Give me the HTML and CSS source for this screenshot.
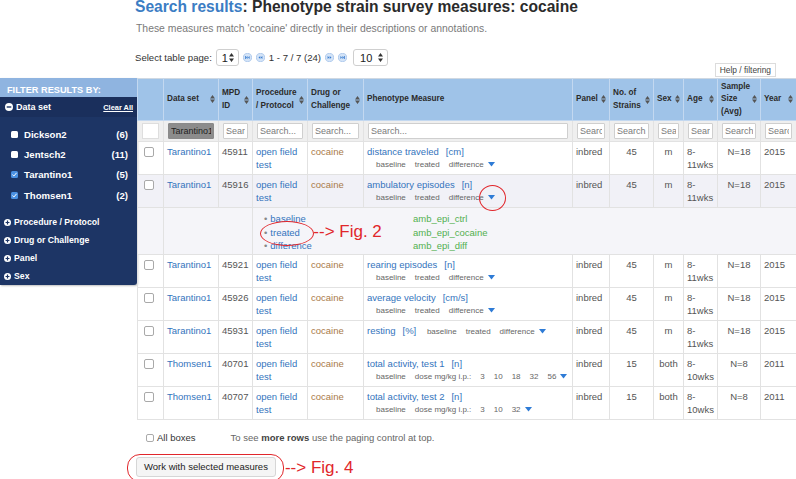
FILE: index.html
```html
<!DOCTYPE html>
<html>
<head>
<meta charset="utf-8">
<title>Search results</title>
<link rel="stylesheet" href="styles.css">
</head>
<body>
<div class="page">
  <aside class="filters">
    <div class="filters-head">FILTER RESULTS BY:</div>
    <div class="facet-head">
      <svg class="ico" width="8" height="8" viewBox="0 0 8 8"><circle cx="4" cy="4" r="4" fill="#fff"/><rect x="1.7" y="3.3" width="4.6" height="1.4" fill="#1d3565"/></svg>
      Data set<span class="clear">Clear All</span>
    </div>
    <div class="facet-list">
      <div class="facet-item"><span class="cb"></span>Dickson2<span class="count">(6)</span></div>
      <div class="facet-item"><span class="cb"></span>Jentsch2<span class="count">(11)</span></div>
      <div class="facet-item"><span class="cb on"><svg width="7" height="7" viewBox="0 0 7 7"><path d="M1.4 3.6 2.9 5 5.6 1.8" fill="none" stroke="#fff" stroke-width="1"/></svg></span>Tarantino1<span class="count">(5)</span></div>
      <div class="facet-item"><span class="cb on"><svg width="7" height="7" viewBox="0 0 7 7"><path d="M1.4 3.6 2.9 5 5.6 1.8" fill="none" stroke="#fff" stroke-width="1"/></svg></span>Thomsen1<span class="count">(2)</span></div>
    </div>
    <div class="facet"><svg class="ico" width="7" height="7" viewBox="0 0 8 8"><circle cx="4" cy="4" r="4" fill="#fff"/><path d="M4 1.8v4.4M1.8 4h4.4" stroke="#1d3565" stroke-width="1.4"/></svg>Procedure / Protocol</div>
    <div class="facet"><svg class="ico" width="7" height="7" viewBox="0 0 8 8"><circle cx="4" cy="4" r="4" fill="#fff"/><path d="M4 1.8v4.4M1.8 4h4.4" stroke="#1d3565" stroke-width="1.4"/></svg>Drug or Challenge</div>
    <div class="facet"><svg class="ico" width="7" height="7" viewBox="0 0 8 8"><circle cx="4" cy="4" r="4" fill="#fff"/><path d="M4 1.8v4.4M1.8 4h4.4" stroke="#1d3565" stroke-width="1.4"/></svg>Panel</div>
    <div class="facet"><svg class="ico" width="7" height="7" viewBox="0 0 8 8"><circle cx="4" cy="4" r="4" fill="#fff"/><path d="M4 1.8v4.4M1.8 4h4.4" stroke="#1d3565" stroke-width="1.4"/></svg>Sex</div>
  </aside>

  <main class="main">
    <h1 class="title"><span class="hl">Search results</span>: Phenotype strain survey measures: cocaine</h1>
    <p class="sub">These measures match 'cocaine' directly in their descriptions or annotations.</p>

    <div class="toolbar">
      <div class="pager">
        <span class="pg-label">Select table page:</span>
        <span class="sel sel1">1<svg width="5" height="9" viewBox="0 0 5 9"><path d="M2.5 0 5 3.4H0zM2.5 9 0 5.6h5z" fill="#333"/></svg></span>
        <svg class="pg" width="9" height="9" viewBox="0 0 9 9"><circle cx="4.5" cy="4.5" r="4.1" fill="#d4e4f7" stroke="#a3c2ea" stroke-width=".8"/><path d="M2.6 3v3" stroke="#3d7fd0" stroke-width=".9"/><path d="M4.6 3 3 4.5 4.6 6zM6.6 3 5 4.5 6.6 6z" fill="#3d7fd0"/></svg>
        <svg class="pg" width="9" height="9" viewBox="0 0 9 9"><circle cx="4.5" cy="4.5" r="4.1" fill="#d4e4f7" stroke="#a3c2ea" stroke-width=".8"/><path d="M4.3 3 2.5 4.5 4.3 6zM6.4 3 4.6 4.5 6.4 6z" fill="#3d7fd0"/></svg>
        <span class="pg-text">1 - 7 / 7 (24)</span>
        <svg class="pg" width="9" height="9" viewBox="0 0 9 9"><circle cx="4.5" cy="4.5" r="4.1" fill="#d4e4f7" stroke="#a3c2ea" stroke-width=".8"/><path d="M4.7 3 6.5 4.5 4.7 6zM2.6 3 4.4 4.5 2.6 6z" fill="#3d7fd0"/></svg>
        <svg class="pg" width="9" height="9" viewBox="0 0 9 9"><circle cx="4.5" cy="4.5" r="4.1" fill="#d4e4f7" stroke="#a3c2ea" stroke-width=".8"/><path d="M6.4 3v3" stroke="#3d7fd0" stroke-width=".9"/><path d="M4.4 3 6 4.5 4.4 6zM2.4 3 4 4.5 2.4 6z" fill="#3d7fd0"/></svg>
        <span class="sel sel10">10<svg width="5" height="9" viewBox="0 0 5 9"><path d="M2.5 0 5 3.4H0zM2.5 9 0 5.6h5z" fill="#333"/></svg></span>
      </div>
      <button class="help">Help / filtering</button>
    </div>

    <table class="grid">
      <colgroup>
        <col class="w-chk"><col class="w-ds"><col class="w-id"><col class="w-proc"><col class="w-drug"><col class="w-ph"><col class="w-panel"><col class="w-str"><col class="w-sex"><col class="w-age"><col class="w-ss"><col class="w-yr">
      </colgroup>
      <thead>
        <tr class="head">
          <th></th>
          <th><div class="th"><span>Data set</span><svg class="sort" width="5" height="8" viewBox="0 0 5 8"><path d="M2.5 0 5 3.4H0zM2.5 8 0 4.6h5z"/></svg></div></th>
          <th><div class="th"><span>MPD<br>ID</span><svg class="sort" width="5" height="8" viewBox="0 0 5 8"><path d="M2.5 0 5 3.4H0zM2.5 8 0 4.6h5z"/></svg></div></th>
          <th><div class="th"><span>Procedure<br>/ Protocol</span><svg class="sort" width="5" height="8" viewBox="0 0 5 8"><path d="M2.5 0 5 3.4H0zM2.5 8 0 4.6h5z"/></svg></div></th>
          <th><div class="th"><span>Drug or<br>Challenge</span><svg class="sort" width="5" height="8" viewBox="0 0 5 8"><path d="M2.5 0 5 3.4H0zM2.5 8 0 4.6h5z"/></svg></div></th>
          <th><div class="th"><span>Phenotype Measure</span></div></th>
          <th><div class="th"><span>Panel</span><svg class="sort" width="5" height="8" viewBox="0 0 5 8"><path d="M2.5 0 5 3.4H0zM2.5 8 0 4.6h5z"/></svg></div></th>
          <th><div class="th"><span>No. of<br>Strains</span><svg class="sort" width="5" height="8" viewBox="0 0 5 8"><path d="M2.5 0 5 3.4H0zM2.5 8 0 4.6h5z"/></svg></div></th>
          <th><div class="th"><span>Sex</span><svg class="sort" width="5" height="8" viewBox="0 0 5 8"><path d="M2.5 0 5 3.4H0zM2.5 8 0 4.6h5z"/></svg></div></th>
          <th><div class="th"><span>Age</span><svg class="sort" width="5" height="8" viewBox="0 0 5 8"><path d="M2.5 0 5 3.4H0zM2.5 8 0 4.6h5z"/></svg></div></th>
          <th><div class="th"><span>Sample<br>Size<br>(Avg)</span><svg class="sort" width="5" height="8" viewBox="0 0 5 8"><path d="M2.5 0 5 3.4H0zM2.5 8 0 4.6h5z"/></svg></div></th>
          <th><div class="th"><span>Year</span><svg class="sort" width="5" height="8" viewBox="0 0 5 8"><path d="M2.5 0 5 3.4H0zM2.5 8 0 4.6h5z"/></svg></div></th>
        </tr>
        <tr class="filter">
          <td><div class="blank"></div></td>
          <td><input class="fi on" value="Tarantino1"></td>
          <td><input class="fi" placeholder="Search..."></td>
          <td><input class="fi" placeholder="Search..."></td>
          <td><input class="fi" placeholder="Search..."></td>
          <td><input class="fi" placeholder="Search..."></td>
          <td><input class="fi" placeholder="Search..."></td>
          <td><input class="fi" placeholder="Search..."></td>
          <td><input class="fi" placeholder="Search..."></td>
          <td><input class="fi" placeholder="Search..."></td>
          <td><input class="fi" placeholder="Search..."></td>
          <td><input class="fi" placeholder="Search..."></td>
        </tr>
      </thead>
      <tbody>
        <tr>
          <td><span class="rcb"></span></td>
          <td><span class="lnk">Tarantino1</span></td>
          <td class="id">45911</td>
          <td><span class="lnk">open field test</span></td>
          <td class="drug">cocaine</td>
          <td><span class="lnk">distance traveled</span><span class="lnk unit">[cm]</span>
            <div class="subs"><span>baseline</span><span>treated</span><span>difference</span><span class="tri"><svg width="7" height="5" viewBox="0 0 7 5"><path d="M0 0h7L3.5 4.5z"/></svg></span></div></td>
          <td>inbred</td><td class="c">45</td><td class="c">m</td><td>8-11wks</td><td class="c">N=18</td><td>2015</td>
        </tr>
        <tr class="hot">
          <td><span class="rcb"></span></td>
          <td><span class="lnk">Tarantino1</span></td>
          <td class="id">45916</td>
          <td><span class="lnk">open field test</span></td>
          <td class="drug">cocaine</td>
          <td><span class="lnk">ambulatory episodes</span><span class="lnk unit">[n]</span>
            <div class="subs"><span>baseline</span><span>treated</span><span>difference</span><span class="tri ring"><svg width="7" height="5" viewBox="0 0 7 5"><path d="M0 0h7L3.5 4.5z"/></svg></span></div></td>
          <td>inbred</td><td class="c">45</td><td class="c">m</td><td>8-11wks</td><td class="c">N=18</td><td>2015</td>
        </tr>
        <tr class="exp">
          <td></td>
          <td colspan="2"></td>
          <td colspan="9">
            <div class="exp-in">
              <ul class="vals">
                <li><span class="lnk">baseline</span></li>
                <li><span class="lnk circled">treated<span class="fig">--&gt; Fig. 2</span></span></li>
                <li><span class="lnk">difference</span></li>
              </ul>
              <ul class="vars">
                <li>amb_epi_ctrl</li>
                <li>amb_epi_cocaine</li>
                <li>amb_epi_diff</li>
              </ul>
            </div>
          </td>
        </tr>
        <tr>
          <td><span class="rcb"></span></td>
          <td><span class="lnk">Tarantino1</span></td>
          <td class="id">45921</td>
          <td><span class="lnk">open field test</span></td>
          <td class="drug">cocaine</td>
          <td><span class="lnk">rearing episodes</span><span class="lnk unit">[n]</span>
            <div class="subs"><span>baseline</span><span>treated</span><span>difference</span><span class="tri"><svg width="7" height="5" viewBox="0 0 7 5"><path d="M0 0h7L3.5 4.5z"/></svg></span></div></td>
          <td>inbred</td><td class="c">45</td><td class="c">m</td><td>8-11wks</td><td class="c">N=18</td><td>2015</td>
        </tr>
        <tr>
          <td><span class="rcb"></span></td>
          <td><span class="lnk">Tarantino1</span></td>
          <td class="id">45926</td>
          <td><span class="lnk">open field test</span></td>
          <td class="drug">cocaine</td>
          <td><span class="lnk">average velocity</span><span class="lnk unit">[cm/s]</span>
            <div class="subs"><span>baseline</span><span>treated</span><span>difference</span><span class="tri"><svg width="7" height="5" viewBox="0 0 7 5"><path d="M0 0h7L3.5 4.5z"/></svg></span></div></td>
          <td>inbred</td><td class="c">45</td><td class="c">m</td><td>8-11wks</td><td class="c">N=18</td><td>2015</td>
        </tr>
        <tr>
          <td><span class="rcb"></span></td>
          <td><span class="lnk">Tarantino1</span></td>
          <td class="id">45931</td>
          <td><span class="lnk">open field test</span></td>
          <td class="drug">cocaine</td>
          <td class="nowrap"><span class="lnk">resting</span><span class="lnk unit">[%]</span>
            <span class="subs inline"><span>baseline</span><span>treated</span><span>difference</span><span class="tri"><svg width="7" height="5" viewBox="0 0 7 5"><path d="M0 0h7L3.5 4.5z"/></svg></span></span></td>
          <td>inbred</td><td class="c">45</td><td class="c">m</td><td>8-11wks</td><td class="c">N=18</td><td>2015</td>
        </tr>
        <tr>
          <td><span class="rcb"></span></td>
          <td><span class="lnk">Thomsen1</span></td>
          <td class="id">40701</td>
          <td><span class="lnk">open field test</span></td>
          <td class="drug">cocaine</td>
          <td><span class="lnk">total activity, test 1</span><span class="lnk unit">[n]</span>
            <div class="subs"><span>baseline</span><span>dose mg/kg i.p.:</span><span>3</span><span>10</span><span>18</span><span>32</span><span>56</span><span class="tri"><svg width="7" height="5" viewBox="0 0 7 5"><path d="M0 0h7L3.5 4.5z"/></svg></span></div></td>
          <td>inbred</td><td class="c">15</td><td class="c">both</td><td>8-10wks</td><td class="c">N=8</td><td>2011</td>
        </tr>
        <tr>
          <td><span class="rcb"></span></td>
          <td><span class="lnk">Thomsen1</span></td>
          <td class="id">40707</td>
          <td><span class="lnk">open field test</span></td>
          <td class="drug">cocaine</td>
          <td><span class="lnk">total activity, test 2</span><span class="lnk unit">[n]</span>
            <div class="subs"><span>baseline</span><span>dose mg/kg i.p.:</span><span>3</span><span>10</span><span>32</span><span class="tri"><svg width="7" height="5" viewBox="0 0 7 5"><path d="M0 0h7L3.5 4.5z"/></svg></span></div></td>
          <td>inbred</td><td class="c">15</td><td class="c">both</td><td>8-10wks</td><td class="c">N=8</td><td>2011</td>
        </tr>
      </tbody>
    </table>

    <div class="footer">
      <span class="fcb"></span><span class="all">All boxes</span>
      <span class="hint">To see <b>more rows</b> use the paging control at top.</span>
    </div>

    <div class="work">
      <div class="work-ring"><button class="work-btn">Work with selected measures</button></div>
      <span class="fig4">--&gt; Fig. 4</span>
    </div>
  </main>
</div>
</body>
</html>
```

FILE: styles.css
```css
* { box-sizing: border-box; }

html, body {
  margin: 0;
  height: 479px;
  overflow: hidden;
}

body {
  font-family: "Liberation Sans", Arial, Helvetica, sans-serif;
  color: #333;
  background: #fff;
}

.page {
  display: flex;
  align-items: flex-start;
  width: 796px;
}

/* ---------- filter sidebar ---------- */
.filters {
  flex: none;
  width: 137px;
  margin-top: 78px;
  background: #1d3565;
  color: #fff;
  border-radius: 0 0 3px 0;
  box-shadow: 1px 1px 2px rgba(0, 0, 0, 0.25);
}

.filters-head {
  height: 19px;
  padding: 6px 0 0 7px;
  background: #8fb4e0;
  font-size: 9.2px;
  font-weight: bold;
  line-height: 12px;
}

.facet-head {
  display: flex;
  align-items: center;
  height: 20px;
  padding: 0 4px 0 5px;
  background: #1a2f5c;
  font-size: 9px;
  font-weight: bold;
}

.ico { flex: none; margin-right: 3px; }

.clear {
  margin-left: auto;
  font-size: 7.4px;
  text-decoration: underline;
}

.facet-list {
  padding: 7px 9px 8px 11px;
}

.facet-item {
  display: flex;
  align-items: center;
  height: 20.3px;
  font-size: 9.6px;
  font-weight: bold;
}

.cb {
  flex: none;
  width: 7px;
  height: 7px;
  margin-right: 6px;
  border-radius: 1.5px;
  background: #fff;
}

.cb svg { display: block; }
.cb.on { background: #4a90e2; }

.count { margin-left: auto; }

.facet {
  display: flex;
  align-items: center;
  height: 18px;
  padding-left: 4px;
  font-size: 8.7px;
  font-weight: bold;
}

/* ---------- main column ---------- */
.main {
  flex: 1;
  min-width: 0;
}

.title {
  margin: -2px 0 0 -2px;
  font-size: 15.6px;
  line-height: 18px;
  font-weight: bold;
  color: #2b2b2b;
  white-space: nowrap;
}

.title .hl { color: #3b7dc4; }

.sub {
  margin: 7px 0 0 -1px;
  font-size: 10.4px;
  line-height: 12px;
  color: #7a7a7a;
}

.toolbar {
  display: flex;
  justify-content: space-between;
  align-items: flex-start;
  height: 29px;
  margin-top: 14px;
}

.pager {
  display: flex;
  align-items: center;
  gap: 4px;
  height: 17px;
  margin-left: -2px;
  font-size: 9.6px;
  color: #333;
}

.sel {
  display: inline-flex;
  align-items: center;
  justify-content: space-between;
  height: 17px;
  padding: 0 4px 0 5px;
  border: 1px solid #cfcfcf;
  border-radius: 3px;
  background: #fff;
  font-size: 11px;
  color: #222;
}

.sel1 { width: 23px; }
.sel10 { width: 35px; margin-left: 2px; padding-left: 6px; }

.pg { flex: none; }

.help {
  height: 14px;
  margin: 14px 20px 0 0;
  padding: 0 4px;
  border: 1px solid #dcdcdc;
  background: #fff;
  font-family: "Liberation Sans", Arial, sans-serif;
  font-size: 8.4px;
  color: #444;
}

/* ---------- table ---------- */
.grid {
  width: 659px;
  border-collapse: collapse;
  table-layout: fixed;
  font-size: 9.5px;
  line-height: 13px;
}

.w-chk { width: 26px; }
.w-ds { width: 55px; }
.w-id { width: 34px; }
.w-proc { width: 55px; }
.w-drug { width: 56px; }
.w-ph { width: 209px; }
.w-panel { width: 37px; }
.w-str { width: 44px; }
.w-sex { width: 30px; }
.w-age { width: 34px; }
.w-ss { width: 43px; }
.w-yr { width: 36px; }

.grid th {
  height: 42px;
  padding: 0 3px 0 3px;
  background: #9fc3e8;
  border: 1px solid #c3d8f0;
  border-top-color: #cfd8e2;
  text-align: left;
  font-size: 8.2px;
  font-weight: bold;
  line-height: 12.2px;
  color: #2b2b2b;
}

.th {
  display: flex;
  align-items: center;
  justify-content: space-between;
}

.sort { flex: none; fill: #555; }

.grid td {
  padding: 3px 3px;
  border: 1px solid #e2e2e2;
  vertical-align: top;
  color: #555;
}

.grid .filter td {
  height: 21px;
  padding: 2px 4px;
  background: #efefef;
  vertical-align: middle;
}

.blank {
  height: 16px;
  border: 1px solid #dedede;
  background: #fff;
}

.fi {
  display: block;
  width: 100%;
  height: 16px;
  padding: 0 2px;
  border: 1px solid #cfcfcf;
  border-radius: 1px;
  background: #fff;
  font-family: "Liberation Sans", Arial, sans-serif;
  font-size: 9px;
  color: #333;
  outline: none;
}

.fi::placeholder { color: #7a7a7a; }

.fi.on {
  background: #8c8c8c;
  border-color: #8a8a8a;
  color: #222;
}

.rcb {
  display: block;
  width: 10px;
  height: 10px;
  margin: 2px 0 0 3px;
  border: 1px solid #a9a9a9;
  border-radius: 2px;
  background: #fff;
}

.lnk { color: #3474bd; }
.unit { margin-left: 7px; }
.grid td.drug { color: #a97a48; }
.grid td.c { text-align: center; }
.nowrap { white-space: nowrap; }

.hot td { background: #f1f1f7; }

.subs {
  padding-left: 9px;
  font-size: 8px;
  color: #666;
  white-space: nowrap;
}

.subs > span { margin-right: 9px; }
.subs.inline { padding-left: 8px; }

.subs > .tri {
  position: relative;
  display: inline-block;
  margin-left: -5px;
  margin-right: 0;
  fill: #2e7bd6;
}

.tri svg { display: block; }

.ring::after {
  content: "";
  position: absolute;
  left: -9px;
  top: -10px;
  width: 25px;
  height: 24px;
  border: 1.4px solid #e1262b;
  border-radius: 50%;
}

/* expanded row */
.grid .exp td { background: #f5f5f9; padding: 4px 0 1px; }

.exp-in {
  display: flex;
  line-height: 13.5px;
}

.vals, .vars {
  margin: 0;
  padding: 0;
  list-style: none;
}

.vals {
  width: 160px;
  padding-left: 11px;
}

.vals li::before {
  content: "\2022";
  margin-right: 3px;
  color: #888;
}

.vars { color: #52b04f; }

.circled {
  position: relative;
  display: inline-block;
}

.circled::after {
  content: "";
  position: absolute;
  left: -10px;
  top: -5px;
  width: 52px;
  height: 23px;
  border: 1.4px solid #e1262b;
  border-radius: 50%;
}

.fig {
  position: absolute;
  left: 43px;
  top: -3px;
  font-size: 17px;
  line-height: 18px;
  color: #e1262b;
  white-space: nowrap;
}

/* footer */
.footer {
  display: flex;
  align-items: center;
  height: 12px;
  margin-top: 12px;
  padding-left: 9px;
  font-size: 9.5px;
  color: #333;
}

.fcb {
  width: 8px;
  height: 8px;
  margin-right: 3px;
  border: 1px solid #aaa;
  border-radius: 2px;
  background: #fff;
}

.hint {
  margin-left: 35px;
  color: #666;
}

.hint b { color: #444; }

.work {
  display: flex;
  align-items: center;
  margin: 10px 0 0 -10px;
}

.work-ring {
  padding: 2px 7px 4px 8px;
  border: 1.4px solid #e1262b;
  border-radius: 13px;
}

.work-btn {
  display: block;
  height: 20px;
  padding: 0 7px;
  border: 1px solid #d6d6d6;
  border-radius: 3px;
  background: #f5f5f5;
  font-family: "Liberation Sans", Arial, sans-serif;
  font-size: 9.5px;
  color: #222;
}

.fig4 {
  margin-left: 1px;
  font-size: 17px;
  line-height: 18px;
  color: #e1262b;
  white-space: nowrap;
}
```
